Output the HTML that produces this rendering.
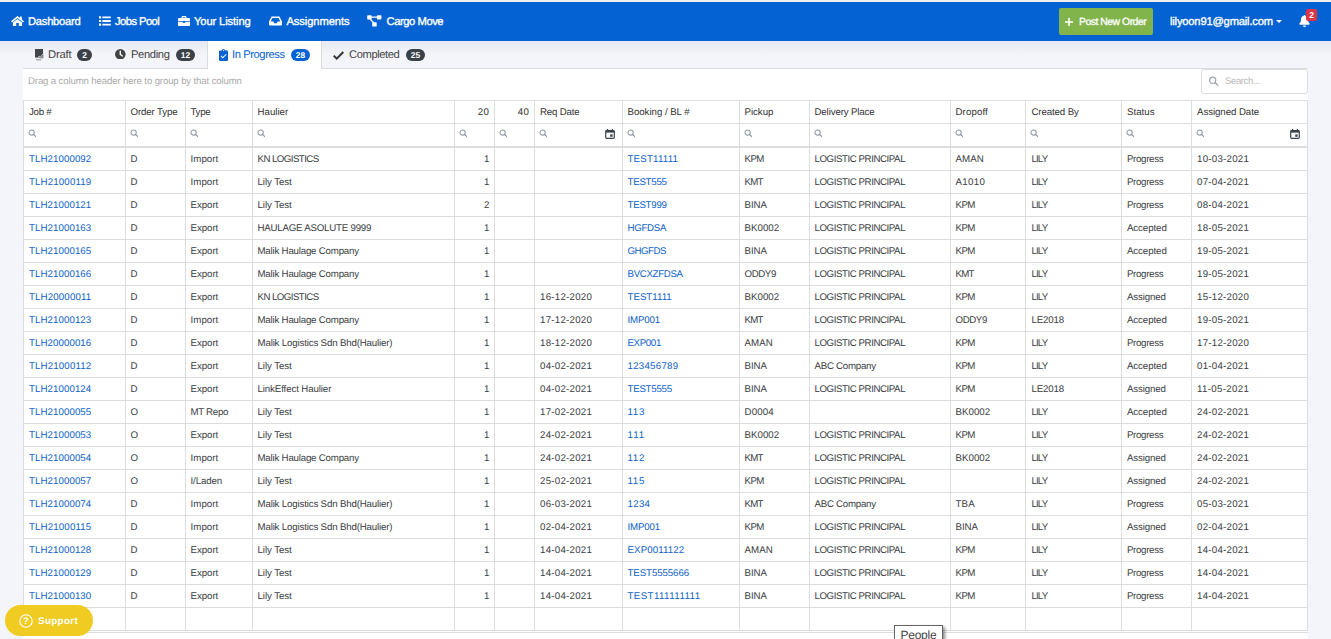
<!DOCTYPE html>
<html lang="en"><head><meta charset="utf-8"><title>In Progress</title>
<style>
*{box-sizing:border-box}
html,body{margin:0;padding:0}
body{width:1331px;height:639px;overflow:hidden;position:relative;background:#f4f5fa;font-family:"Liberation Sans",sans-serif;color:#333;text-rendering:geometricPrecision}
.topline{position:absolute;left:0;top:0;width:1331px;height:2px;background:#f3efee}
.nav{position:absolute;left:0;top:2px;width:1331px;height:39px;background:#0562d2}
.shadow{position:absolute;left:0;top:41px;width:1331px;height:14px;background:linear-gradient(#e6e9f2,#f4f5fa)}
.ni{position:absolute;top:0;height:39px;line-height:40px;color:#fff;font-size:11.2px;white-space:nowrap;font-weight:normal;-webkit-text-stroke:0.35px #fff}
.ni svg{position:absolute;top:14px}
.btn{position:absolute;left:1059px;top:6px;width:94px;height:27px;background:#82b44c;border-radius:2px;color:#fff;font-size:10.4px;line-height:29px;font-weight:normal;-webkit-text-stroke:0.3px #fff;letter-spacing:-0.48px}
.tabs{position:absolute;left:23px;top:41px;width:1285px;height:28px;border-bottom:1px solid #dcdcdc}
.tab{position:absolute;top:0;height:27px;font-size:11.2px;line-height:29px;color:#444;white-space:nowrap}
.tab.act{background:#fff;border-left:1px solid #dcdcdc;border-right:1px solid #dcdcdc;height:28px;color:#0562d2}
.badge{position:absolute;top:8px;height:12px;border-radius:6px;background:#3b4148;color:#fff;font-size:8.4px;font-weight:bold;line-height:12.5px;text-align:center}
.panel{position:absolute;left:23px;top:69px;width:1285px;height:571px;background:#fff}
.drag{position:absolute;left:28px;top:76px;font-size:9.6px;color:#aaa;line-height:12px;white-space:nowrap;letter-spacing:-0.12px}
.search{position:absolute;left:1201px;top:69px;width:107px;height:25px;border:1px solid #ddd;border-radius:3px;background:#fff;font-size:9.6px;color:#bbb;line-height:24.5px}
table.grid{position:absolute;left:23px;top:100px;border-collapse:separate;border-spacing:0;table-layout:fixed;width:1285px;border-top:1px solid #ddd;border-right:1px solid #ddd;font-size:9.7px;text-rendering:geometricPrecision}
table.grid td{border-left:1px solid #ddd;border-bottom:1px solid #ddd;height:23px;padding:2px 0 0 4.5px;white-space:nowrap;overflow:hidden;line-height:20px;color:#333;position:relative}
table.grid td.r{text-align:right;padding-left:0;padding-right:4.5px}
table.grid td.a{color:#0d62c9}
table.grid td.p0{padding-left:5.0px}
table.grid td.p6{padding-left:5.0px}
table.grid td.p11{padding-left:5.4px}
table.grid td.p12{padding-left:4.9px}
table.grid td.p13{padding-left:5.0px}
tr.ft td{height:24px;border-bottom:2px solid #ddd}
tr.dr td{color:#3a3d42}
.mag{position:absolute;left:3.7px;top:5.4px;width:8.8px;height:8.8px}
.cal{position:absolute;right:7px;top:5px;width:10px;height:10px}
.bottomline{position:absolute;left:23px;top:632px;width:1285px;height:1px;background:#ddd}
.support{position:absolute;left:5px;top:605px;width:88px;height:31px;border-radius:16px;background:#f0cc22;color:#fff;font-weight:bold;font-size:9.8px;line-height:33px}
.tip{position:absolute;left:894px;top:625px;width:49px;height:20px;border:1px solid #666;background:#fff;font-size:12px;line-height:18px;color:#444;box-shadow:2px 2px 3px rgba(0,0,0,.45)}
</style></head><body>
<div class="topline"></div>
<div class="nav">
 <div class="ni" style="left:28px;letter-spacing:-0.25px"><svg style="left:-17px" width="13" height="10" viewBox="0 0 13 10"><path fill="#fff" d="M6.5 0 L0 5.3 L1 6.5 L6.5 2 L12 6.5 L13 5.3 L10.8 3.5 V0.5 H9.1 V2.1 Z M6.5 2.9 L1.9 6.6 V10 H5.2 V7 H7.8 V10 H11.1 V6.6 Z"/></svg>Dashboard</div>
 <div class="ni" style="left:115px;letter-spacing:-0.55px"><svg style="left:-16px" width="12" height="10" viewBox="0 0 12 10"><path fill="#fff" d="M0 0.2h2.1v2.2h-2.1z M0 3.9h2.1v2.2h-2.1z M0 7.6h2.1v2.2h-2.1z M3.3 0.4h8.5v1.8h-8.5z M3.3 4.1h8.5v1.8h-8.5z M3.3 7.8h8.5v1.8h-8.5z"/></svg>Jobs Pool</div>
 <div class="ni" style="left:194px;letter-spacing:-0.12px"><svg style="left:-16px" width="12" height="10" viewBox="0 0 12 10"><path fill="#fff" fill-rule="evenodd" d="M3.6 0.9 Q3.6 0 4.5 0 H7.5 Q8.4 0 8.4 0.9 V2 H11 Q12 2 12 3 V5 H0 V3 Q0 2 1 2 H3.6 Z M4.8 1.2 V2 H7.2 V1.2 Z M0 5.8 H4.6 V6.8 H7.4 V5.8 H12 V9 Q12 10 11 10 H1 Q0 10 0 9 Z"/></svg>Your Listing</div>
 <div class="ni" style="left:286.5px;letter-spacing:-0.1px"><svg style="left:-17.5px" width="13" height="10" viewBox="0 0 13 10"><path fill="#fff" fill-rule="evenodd" d="M2.6 0.5 H10.4 L13 5.6 V8.6 Q13 9.6 12 9.6 H1 Q0 9.6 0 8.6 V5.6 Z M3.5 2 L1.7 5.6 H4.4 L5.2 7.2 H7.8 L8.6 5.6 H11.3 L9.5 2 Z"/></svg>Assignments</div>
 <div class="ni" style="left:386.5px;letter-spacing:-0.43px"><svg style="left:-19.2px;top:13px" width="15" height="12" viewBox="0 0 15 12"><rect x="0.2" y="0.2" width="4.5" height="4.3" rx="0.7" fill="#fff"/><rect x="9.9" y="0.2" width="4.5" height="4.3" rx="0.7" fill="#fff"/><rect x="5.2" y="7.3" width="4.5" height="4.3" rx="0.7" fill="#fff"/><path d="M4.5 2.1 H10 M3.3 4.2 L6.6 7.8" stroke="#fff" stroke-width="1.3" fill="none"/></svg>Cargo Move</div>
 <div class="btn"><svg style="position:absolute;left:6px;top:9.5px" width="8" height="8" viewBox="0 0 8 8"><path fill="#fff" d="M3.2 0h1.6v3.2h3.2v1.6h-3.2v3.2h-1.6v-3.2h-3.2v-1.6h3.2z"/></svg><span style="position:absolute;left:20px">Post New Order</span></div>
 <div class="ni" style="left:1170px;letter-spacing:-0.19px">lilyoon91@gmail.com<svg style="left:106px;top:17.5px" width="6" height="3" viewBox="0 0 6 3"><path fill="#fff" d="M0 0h6l-3 3z"/></svg></div>
 <svg style="position:absolute;left:1299px;top:13px" width="11" height="12" viewBox="0 0 11 12"><path fill="#fff" d="M5.5 0 Q6.3 0 6.3 0.8 Q9 1.5 9 4.8 Q9 7.2 10.6 8.6 Q11 9.6 10 9.8 H1 Q0 9.6 0.4 8.6 Q2 7.2 2 4.8 Q2 1.5 4.7 0.8 Q4.7 0 5.5 0 Z M4 10.4 H7 Q7 12 5.5 12 Q4 12 4 10.4 Z"/></svg>
 <div style="position:absolute;left:1306px;top:7px;width:11px;height:12px;border-radius:2px;background:#dc3545;color:#fff;font-size:8.5px;font-weight:bold;line-height:12px;text-align:center">2</div>
</div>
<div class="shadow"></div>
<div class="tabs">
 <div class="tab" style="left:0;width:79px"><svg style="position:absolute;left:11.5px;top:7.7px" width="9" height="12" viewBox="0 0 9 12"><path fill="#41464d" d="M0 0h8v8.6h-8z"/><path d="M3.4 8.6 q0.9 -3 1.8 -0.6 q0.6 1.6 1.4 -1.6 L8.6 4.6" stroke="#c9ced6" stroke-width="1" fill="none"/><path d="M4.6 8.6 L8.6 5.6 V9.4 H4.6z" fill="#8f96a0" opacity=".8"/><path d="M1 10.8 H6.2" stroke="#8a9098" stroke-width="1"/></svg><span style="position:absolute;left:25px;letter-spacing:-0.15px">Draft</span><span class="badge" style="left:54px;width:15px">2</span></div>
 <div class="tab" style="left:79px;width:105px"><svg style="position:absolute;left:13px;top:7.8px" width="10.6" height="10.6" viewBox="0 0 11 11"><circle cx="5.5" cy="5.5" r="5.5" fill="#444"/><path d="M5.5 2.2 V5.6 L7.6 7.2" stroke="#fff" stroke-width="1.4" fill="none" stroke-linecap="round"/></svg><span style="position:absolute;left:29px;letter-spacing:-0.35px">Pending</span><span class="badge" style="left:74px;width:19px">12</span></div>
 <div class="tab act" style="left:184px;width:115px"><svg style="position:absolute;left:11px;top:7.6px" width="9" height="12" viewBox="0 0 9 12"><path fill="#0562d2" fill-rule="evenodd" d="M1 1.5 H2.8 Q3 0 4.5 0 Q6 0 6.2 1.5 H8 Q9 1.5 9 2.5 V11 Q9 12 8 12 H1 Q0 12 0 11 V2.5 Q0 1.5 1 1.5 Z M4.5 1 A0.6 0.6 0 1 0 4.5 2.2 A0.6 0.6 0 1 0 4.5 1 Z M3.8 9.4 L7.6 5.6 L6.9 4.9 L3.8 8 L2.3 6.5 L1.6 7.2 Z"/></svg><span style="position:absolute;left:24px;letter-spacing:-0.42px">In Progress</span><span class="badge" style="left:83px;width:19px;background:#0562d2">28</span></div>
 <div class="tab" style="left:299px;width:120px"><svg style="position:absolute;left:11px;top:9.6px" width="11" height="9" viewBox="0 0 11 9"><path fill="#333" d="M3.7 9 L0 5.3 L1.4 3.9 L3.7 6.2 L9.6 0.3 L11 1.7 Z"/></svg><span style="position:absolute;left:27px;letter-spacing:-0.41px">Completed</span><span class="badge" style="left:84px;width:19px">25</span></div>
</div>
<div class="panel"></div>
<div class="drag">Drag a column header here to group by that column</div>
<div class="search"><svg style="position:absolute;left:6px;top:5px" width="12" height="12" viewBox="0 0 12 12"><circle cx="4.7" cy="5.2" r="3.1" fill="none" stroke="#9a9fa8" stroke-width="1.1"/><path d="M7 7.5 L9.9 10.2" stroke="#9a9fa8" stroke-width="1.2" stroke-linecap="round"/></svg><span style="position:absolute;left:23px;letter-spacing:-0.42px">Search...</span></div>
<table class="grid"><colgroup><col style="width:102px"><col style="width:60px"><col style="width:67px"><col style="width:202px"><col style="width:40px"><col style="width:40px"><col style="width:88px"><col style="width:117px"><col style="width:70px"><col style="width:141px"><col style="width:75px"><col style="width:96px"><col style="width:70px"><col style="width:116px"></colgroup>
<tr class="hd"><td class="p0"><span style="letter-spacing:-0.25px">Job #</span></td><td><span style="letter-spacing:-0.12px">Order Type</span></td><td><span style="letter-spacing:-0.27px">Type</span></td><td><span style="letter-spacing:-0.00px">Haulier</span></td><td class="r"><span style="letter-spacing:0.52px">20</span></td><td class="r"><span style="letter-spacing:0.52px">40</span></td><td class="p6"><span style="letter-spacing:-0.18px">Req Date</span></td><td><span style="letter-spacing:-0.04px">Booking / BL #</span></td><td><span style="letter-spacing:-0.04px">Pickup</span></td><td><span style="letter-spacing:-0.13px">Delivery Place</span></td><td><span style="letter-spacing:0.10px">Dropoff</span></td><td class="p11"><span style="letter-spacing:-0.11px">Created By</span></td><td class="p12"><span style="letter-spacing:0.05px">Status</span></td><td class="p13"><span style="letter-spacing:-0.07px">Assigned Date</span></td></tr>
<tr class="ft"><td><svg class="mag" viewBox="0 0 10 10"><circle cx="4.1" cy="4.1" r="3" fill="none" stroke="#8e96a3" stroke-width="1.15"/><path d="M6.3 6.3 L9.2 9" stroke="#8e96a3" stroke-width="1.3" stroke-linecap="round"/></svg></td><td><svg class="mag" viewBox="0 0 10 10"><circle cx="4.1" cy="4.1" r="3" fill="none" stroke="#8e96a3" stroke-width="1.15"/><path d="M6.3 6.3 L9.2 9" stroke="#8e96a3" stroke-width="1.3" stroke-linecap="round"/></svg></td><td><svg class="mag" viewBox="0 0 10 10"><circle cx="4.1" cy="4.1" r="3" fill="none" stroke="#8e96a3" stroke-width="1.15"/><path d="M6.3 6.3 L9.2 9" stroke="#8e96a3" stroke-width="1.3" stroke-linecap="round"/></svg></td><td><svg class="mag" viewBox="0 0 10 10"><circle cx="4.1" cy="4.1" r="3" fill="none" stroke="#8e96a3" stroke-width="1.15"/><path d="M6.3 6.3 L9.2 9" stroke="#8e96a3" stroke-width="1.3" stroke-linecap="round"/></svg></td><td><svg class="mag" viewBox="0 0 10 10"><circle cx="4.1" cy="4.1" r="3" fill="none" stroke="#8e96a3" stroke-width="1.15"/><path d="M6.3 6.3 L9.2 9" stroke="#8e96a3" stroke-width="1.3" stroke-linecap="round"/></svg></td><td><svg class="mag" viewBox="0 0 10 10"><circle cx="4.1" cy="4.1" r="3" fill="none" stroke="#8e96a3" stroke-width="1.15"/><path d="M6.3 6.3 L9.2 9" stroke="#8e96a3" stroke-width="1.3" stroke-linecap="round"/></svg></td><td><svg class="mag" viewBox="0 0 10 10"><circle cx="4.1" cy="4.1" r="3" fill="none" stroke="#8e96a3" stroke-width="1.15"/><path d="M6.3 6.3 L9.2 9" stroke="#8e96a3" stroke-width="1.3" stroke-linecap="round"/></svg><svg class="cal" viewBox="0 0 10 10"><rect x="0.7" y="1.6" width="8.6" height="7.8" rx="1.1" fill="none" stroke="#3a424c" stroke-width="1.2"/><rect x="0.7" y="1.4" width="8.6" height="2.2" fill="#3a424c"/><rect x="2" y="0" width="1.2" height="2" fill="#3a424c"/><rect x="6.8" y="0" width="1.2" height="2" fill="#3a424c"/><rect x="5.2" y="5.4" width="2.4" height="2.4" fill="#3a424c"/></svg></td><td><svg class="mag" viewBox="0 0 10 10"><circle cx="4.1" cy="4.1" r="3" fill="none" stroke="#8e96a3" stroke-width="1.15"/><path d="M6.3 6.3 L9.2 9" stroke="#8e96a3" stroke-width="1.3" stroke-linecap="round"/></svg></td><td><svg class="mag" viewBox="0 0 10 10"><circle cx="4.1" cy="4.1" r="3" fill="none" stroke="#8e96a3" stroke-width="1.15"/><path d="M6.3 6.3 L9.2 9" stroke="#8e96a3" stroke-width="1.3" stroke-linecap="round"/></svg></td><td><svg class="mag" viewBox="0 0 10 10"><circle cx="4.1" cy="4.1" r="3" fill="none" stroke="#8e96a3" stroke-width="1.15"/><path d="M6.3 6.3 L9.2 9" stroke="#8e96a3" stroke-width="1.3" stroke-linecap="round"/></svg></td><td><svg class="mag" viewBox="0 0 10 10"><circle cx="4.1" cy="4.1" r="3" fill="none" stroke="#8e96a3" stroke-width="1.15"/><path d="M6.3 6.3 L9.2 9" stroke="#8e96a3" stroke-width="1.3" stroke-linecap="round"/></svg></td><td><svg class="mag" viewBox="0 0 10 10"><circle cx="4.1" cy="4.1" r="3" fill="none" stroke="#8e96a3" stroke-width="1.15"/><path d="M6.3 6.3 L9.2 9" stroke="#8e96a3" stroke-width="1.3" stroke-linecap="round"/></svg></td><td><svg class="mag" viewBox="0 0 10 10"><circle cx="4.1" cy="4.1" r="3" fill="none" stroke="#8e96a3" stroke-width="1.15"/><path d="M6.3 6.3 L9.2 9" stroke="#8e96a3" stroke-width="1.3" stroke-linecap="round"/></svg></td><td><svg class="mag" viewBox="0 0 10 10"><circle cx="4.1" cy="4.1" r="3" fill="none" stroke="#8e96a3" stroke-width="1.15"/><path d="M6.3 6.3 L9.2 9" stroke="#8e96a3" stroke-width="1.3" stroke-linecap="round"/></svg><svg class="cal" viewBox="0 0 10 10"><rect x="0.7" y="1.6" width="8.6" height="7.8" rx="1.1" fill="none" stroke="#3a424c" stroke-width="1.2"/><rect x="0.7" y="1.4" width="8.6" height="2.2" fill="#3a424c"/><rect x="2" y="0" width="1.2" height="2" fill="#3a424c"/><rect x="6.8" y="0" width="1.2" height="2" fill="#3a424c"/><rect x="5.2" y="5.4" width="2.4" height="2.4" fill="#3a424c"/></svg></td></tr>
<tr class="dr"><td class="p0 a"><span style="letter-spacing:0.08px">TLH21000092</span></td><td>D</td><td><span style="letter-spacing:0.07px">Import</span></td><td><span style="letter-spacing:-0.56px">KN LOGISTICS</span></td><td class="r">1</td><td class="r"></td><td class="p6"></td><td class="a"><span style="letter-spacing:0.20px">TEST11111</span></td><td><span style="letter-spacing:-0.55px">KPM</span></td><td><span style="letter-spacing:-0.43px">LOGISTIC PRINCIPAL</span></td><td><span style="letter-spacing:0.07px">AMAN</span></td><td class="p11"><span style="letter-spacing:-0.81px">LILY</span></td><td class="p12"><span style="letter-spacing:-0.30px">Progress</span></td><td class="p13"><span style="letter-spacing:0.26px">10-03-2021</span></td></tr>
<tr class="dr"><td class="p0 a"><span style="letter-spacing:0.15px">TLH21000119</span></td><td>D</td><td><span style="letter-spacing:0.07px">Import</span></td><td><span style="letter-spacing:-0.08px">Lily Test</span></td><td class="r">1</td><td class="r"></td><td class="p6"></td><td class="a"><span style="letter-spacing:-0.25px">TEST555</span></td><td><span style="letter-spacing:-0.78px">KMT</span></td><td><span style="letter-spacing:-0.43px">LOGISTIC PRINCIPAL</span></td><td><span style="letter-spacing:0.37px">A1010</span></td><td class="p11"><span style="letter-spacing:-0.81px">LILY</span></td><td class="p12"><span style="letter-spacing:-0.30px">Progress</span></td><td class="p13"><span style="letter-spacing:0.26px">07-04-2021</span></td></tr>
<tr class="dr"><td class="p0 a"><span style="letter-spacing:0.08px">TLH21000121</span></td><td>D</td><td><span style="letter-spacing:-0.04px">Export</span></td><td><span style="letter-spacing:-0.08px">Lily Test</span></td><td class="r">2</td><td class="r"></td><td class="p6"></td><td class="a"><span style="letter-spacing:-0.25px">TEST999</span></td><td><span style="letter-spacing:-0.04px">BINA</span></td><td><span style="letter-spacing:-0.43px">LOGISTIC PRINCIPAL</span></td><td><span style="letter-spacing:-0.55px">KPM</span></td><td class="p11"><span style="letter-spacing:-0.81px">LILY</span></td><td class="p12"><span style="letter-spacing:-0.30px">Progress</span></td><td class="p13"><span style="letter-spacing:0.26px">08-04-2021</span></td></tr>
<tr class="dr"><td class="p0 a"><span style="letter-spacing:0.08px">TLH21000163</span></td><td>D</td><td><span style="letter-spacing:-0.04px">Export</span></td><td><span style="letter-spacing:-0.21px">HAULAGE ASOLUTE 9999</span></td><td class="r">1</td><td class="r"></td><td class="p6"></td><td class="a"><span style="letter-spacing:-0.29px">HGFDSA</span></td><td><span style="letter-spacing:0.04px">BK0002</span></td><td><span style="letter-spacing:-0.43px">LOGISTIC PRINCIPAL</span></td><td><span style="letter-spacing:-0.55px">KPM</span></td><td class="p11"><span style="letter-spacing:-0.81px">LILY</span></td><td class="p12"><span style="letter-spacing:-0.07px">Accepted</span></td><td class="p13"><span style="letter-spacing:0.26px">18-05-2021</span></td></tr>
<tr class="dr"><td class="p0 a"><span style="letter-spacing:0.08px">TLH21000165</span></td><td>D</td><td><span style="letter-spacing:-0.04px">Export</span></td><td><span style="letter-spacing:-0.20px">Malik Haulage Company</span></td><td class="r">1</td><td class="r"></td><td class="p6"></td><td class="a"><span style="letter-spacing:-0.51px">GHGFDS</span></td><td><span style="letter-spacing:-0.04px">BINA</span></td><td><span style="letter-spacing:-0.43px">LOGISTIC PRINCIPAL</span></td><td><span style="letter-spacing:-0.55px">KPM</span></td><td class="p11"><span style="letter-spacing:-0.81px">LILY</span></td><td class="p12"><span style="letter-spacing:-0.07px">Accepted</span></td><td class="p13"><span style="letter-spacing:0.26px">19-05-2021</span></td></tr>
<tr class="dr"><td class="p0 a"><span style="letter-spacing:0.08px">TLH21000166</span></td><td>D</td><td><span style="letter-spacing:-0.04px">Export</span></td><td><span style="letter-spacing:-0.20px">Malik Haulage Company</span></td><td class="r">1</td><td class="r"></td><td class="p6"></td><td class="a"><span style="letter-spacing:-0.32px">BVCXZFDSA</span></td><td><span style="letter-spacing:-0.40px">ODDY9</span></td><td><span style="letter-spacing:-0.43px">LOGISTIC PRINCIPAL</span></td><td><span style="letter-spacing:-0.78px">KMT</span></td><td class="p11"><span style="letter-spacing:-0.81px">LILY</span></td><td class="p12"><span style="letter-spacing:-0.30px">Progress</span></td><td class="p13"><span style="letter-spacing:0.26px">19-05-2021</span></td></tr>
<tr class="dr"><td class="p0 a"><span style="letter-spacing:0.15px">TLH20000011</span></td><td>D</td><td><span style="letter-spacing:-0.04px">Export</span></td><td><span style="letter-spacing:-0.56px">KN LOGISTICS</span></td><td class="r">1</td><td class="r"></td><td class="p6"><span style="letter-spacing:0.26px">16-12-2020</span></td><td class="a"><span style="letter-spacing:0.01px">TEST1111</span></td><td><span style="letter-spacing:0.04px">BK0002</span></td><td><span style="letter-spacing:-0.43px">LOGISTIC PRINCIPAL</span></td><td><span style="letter-spacing:-0.55px">KPM</span></td><td class="p11"><span style="letter-spacing:-0.81px">LILY</span></td><td class="p12"><span style="letter-spacing:-0.12px">Assigned</span></td><td class="p13"><span style="letter-spacing:0.26px">15-12-2020</span></td></tr>
<tr class="dr"><td class="p0 a"><span style="letter-spacing:0.08px">TLH21000123</span></td><td>D</td><td><span style="letter-spacing:0.07px">Import</span></td><td><span style="letter-spacing:-0.20px">Malik Haulage Company</span></td><td class="r">1</td><td class="r"></td><td class="p6"><span style="letter-spacing:0.26px">17-12-2020</span></td><td class="a"><span style="letter-spacing:-0.16px">IMP001</span></td><td><span style="letter-spacing:-0.78px">KMT</span></td><td><span style="letter-spacing:-0.43px">LOGISTIC PRINCIPAL</span></td><td><span style="letter-spacing:-0.40px">ODDY9</span></td><td class="p11"><span style="letter-spacing:-0.14px">LE2018</span></td><td class="p12"><span style="letter-spacing:-0.07px">Accepted</span></td><td class="p13"><span style="letter-spacing:0.26px">19-05-2021</span></td></tr>
<tr class="dr"><td class="p0 a"><span style="letter-spacing:0.08px">TLH20000016</span></td><td>D</td><td><span style="letter-spacing:-0.04px">Export</span></td><td><span style="letter-spacing:-0.16px">Malik Logistics Sdn Bhd(Haulier)</span></td><td class="r">1</td><td class="r"></td><td class="p6"><span style="letter-spacing:0.26px">18-12-2020</span></td><td class="a"><span style="letter-spacing:-0.35px">EXP001</span></td><td><span style="letter-spacing:0.07px">AMAN</span></td><td><span style="letter-spacing:-0.43px">LOGISTIC PRINCIPAL</span></td><td><span style="letter-spacing:-0.55px">KPM</span></td><td class="p11"><span style="letter-spacing:-0.81px">LILY</span></td><td class="p12"><span style="letter-spacing:-0.30px">Progress</span></td><td class="p13"><span style="letter-spacing:0.26px">17-12-2020</span></td></tr>
<tr class="dr"><td class="p0 a"><span style="letter-spacing:0.15px">TLH21000112</span></td><td>D</td><td><span style="letter-spacing:-0.04px">Export</span></td><td><span style="letter-spacing:-0.08px">Lily Test</span></td><td class="r">1</td><td class="r"></td><td class="p6"><span style="letter-spacing:0.26px">04-02-2021</span></td><td class="a"><span style="letter-spacing:0.26px">123456789</span></td><td><span style="letter-spacing:-0.04px">BINA</span></td><td><span style="letter-spacing:-0.25px">ABC Company</span></td><td><span style="letter-spacing:-0.55px">KPM</span></td><td class="p11"><span style="letter-spacing:-0.81px">LILY</span></td><td class="p12"><span style="letter-spacing:-0.07px">Accepted</span></td><td class="p13"><span style="letter-spacing:0.26px">01-04-2021</span></td></tr>
<tr class="dr"><td class="p0 a"><span style="letter-spacing:0.08px">TLH21000124</span></td><td>D</td><td><span style="letter-spacing:-0.04px">Export</span></td><td><span style="letter-spacing:-0.11px">LinkEffect Haulier</span></td><td class="r">1</td><td class="r"></td><td class="p6"><span style="letter-spacing:0.26px">04-02-2021</span></td><td class="a"><span style="letter-spacing:-0.24px">TEST5555</span></td><td><span style="letter-spacing:-0.04px">BINA</span></td><td><span style="letter-spacing:-0.43px">LOGISTIC PRINCIPAL</span></td><td><span style="letter-spacing:-0.55px">KPM</span></td><td class="p11"><span style="letter-spacing:-0.14px">LE2018</span></td><td class="p12"><span style="letter-spacing:-0.12px">Assigned</span></td><td class="p13"><span style="letter-spacing:0.34px">11-05-2021</span></td></tr>
<tr class="dr"><td class="p0 a"><span style="letter-spacing:0.08px">TLH21000055</span></td><td>O</td><td><span style="letter-spacing:-0.30px">MT Repo</span></td><td><span style="letter-spacing:-0.08px">Lily Test</span></td><td class="r">1</td><td class="r"></td><td class="p6"><span style="letter-spacing:0.26px">17-02-2021</span></td><td class="a"><span style="letter-spacing:0.67px">113</span></td><td><span style="letter-spacing:0.13px">D0004</span></td><td></td><td><span style="letter-spacing:0.04px">BK0002</span></td><td class="p11"><span style="letter-spacing:-0.81px">LILY</span></td><td class="p12"><span style="letter-spacing:-0.07px">Accepted</span></td><td class="p13"><span style="letter-spacing:0.26px">24-02-2021</span></td></tr>
<tr class="dr"><td class="p0 a"><span style="letter-spacing:0.08px">TLH21000053</span></td><td>O</td><td><span style="letter-spacing:-0.04px">Export</span></td><td><span style="letter-spacing:-0.08px">Lily Test</span></td><td class="r">1</td><td class="r"></td><td class="p6"><span style="letter-spacing:0.26px">24-02-2021</span></td><td class="a"><span style="letter-spacing:1.00px">111</span></td><td><span style="letter-spacing:0.04px">BK0002</span></td><td><span style="letter-spacing:-0.43px">LOGISTIC PRINCIPAL</span></td><td><span style="letter-spacing:-0.55px">KPM</span></td><td class="p11"><span style="letter-spacing:-0.81px">LILY</span></td><td class="p12"><span style="letter-spacing:-0.30px">Progress</span></td><td class="p13"><span style="letter-spacing:0.26px">24-02-2021</span></td></tr>
<tr class="dr"><td class="p0 a"><span style="letter-spacing:0.08px">TLH21000054</span></td><td>O</td><td><span style="letter-spacing:0.07px">Import</span></td><td><span style="letter-spacing:-0.20px">Malik Haulage Company</span></td><td class="r">1</td><td class="r"></td><td class="p6"><span style="letter-spacing:0.26px">24-02-2021</span></td><td class="a"><span style="letter-spacing:0.67px">112</span></td><td><span style="letter-spacing:-0.78px">KMT</span></td><td><span style="letter-spacing:-0.43px">LOGISTIC PRINCIPAL</span></td><td><span style="letter-spacing:0.04px">BK0002</span></td><td class="p11"><span style="letter-spacing:-0.81px">LILY</span></td><td class="p12"><span style="letter-spacing:-0.12px">Assigned</span></td><td class="p13"><span style="letter-spacing:0.26px">24-02-2021</span></td></tr>
<tr class="dr"><td class="p0 a"><span style="letter-spacing:0.08px">TLH21000057</span></td><td>O</td><td><span style="letter-spacing:-0.10px">I/Laden</span></td><td><span style="letter-spacing:-0.08px">Lily Test</span></td><td class="r">1</td><td class="r"></td><td class="p6"><span style="letter-spacing:0.26px">25-02-2021</span></td><td class="a"><span style="letter-spacing:0.67px">115</span></td><td><span style="letter-spacing:-0.55px">KPM</span></td><td><span style="letter-spacing:-0.43px">LOGISTIC PRINCIPAL</span></td><td></td><td class="p11"><span style="letter-spacing:-0.81px">LILY</span></td><td class="p12"><span style="letter-spacing:-0.12px">Assigned</span></td><td class="p13"><span style="letter-spacing:0.26px">24-02-2021</span></td></tr>
<tr class="dr"><td class="p0 a"><span style="letter-spacing:0.08px">TLH21000074</span></td><td>D</td><td><span style="letter-spacing:0.07px">Import</span></td><td><span style="letter-spacing:-0.16px">Malik Logistics Sdn Bhd(Haulier)</span></td><td class="r">1</td><td class="r"></td><td class="p6"><span style="letter-spacing:0.26px">06-03-2021</span></td><td class="a"><span style="letter-spacing:0.31px">1234</span></td><td><span style="letter-spacing:-0.78px">KMT</span></td><td><span style="letter-spacing:-0.25px">ABC Company</span></td><td><span style="letter-spacing:0.13px">TBA</span></td><td class="p11"><span style="letter-spacing:-0.81px">LILY</span></td><td class="p12"><span style="letter-spacing:-0.30px">Progress</span></td><td class="p13"><span style="letter-spacing:0.26px">05-03-2021</span></td></tr>
<tr class="dr"><td class="p0 a"><span style="letter-spacing:0.15px">TLH21000115</span></td><td>D</td><td><span style="letter-spacing:0.07px">Import</span></td><td><span style="letter-spacing:-0.16px">Malik Logistics Sdn Bhd(Haulier)</span></td><td class="r">1</td><td class="r"></td><td class="p6"><span style="letter-spacing:0.26px">02-04-2021</span></td><td class="a"><span style="letter-spacing:-0.16px">IMP001</span></td><td><span style="letter-spacing:-0.55px">KPM</span></td><td><span style="letter-spacing:-0.43px">LOGISTIC PRINCIPAL</span></td><td><span style="letter-spacing:-0.04px">BINA</span></td><td class="p11"><span style="letter-spacing:-0.81px">LILY</span></td><td class="p12"><span style="letter-spacing:-0.12px">Assigned</span></td><td class="p13"><span style="letter-spacing:0.26px">02-04-2021</span></td></tr>
<tr class="dr"><td class="p0 a"><span style="letter-spacing:0.08px">TLH21000128</span></td><td>D</td><td><span style="letter-spacing:-0.04px">Export</span></td><td><span style="letter-spacing:-0.08px">Lily Test</span></td><td class="r">1</td><td class="r"></td><td class="p6"><span style="letter-spacing:0.26px">14-04-2021</span></td><td class="a"><span style="letter-spacing:0.11px">EXP0011122</span></td><td><span style="letter-spacing:0.07px">AMAN</span></td><td><span style="letter-spacing:-0.43px">LOGISTIC PRINCIPAL</span></td><td><span style="letter-spacing:-0.55px">KPM</span></td><td class="p11"><span style="letter-spacing:-0.81px">LILY</span></td><td class="p12"><span style="letter-spacing:-0.30px">Progress</span></td><td class="p13"><span style="letter-spacing:0.26px">14-04-2021</span></td></tr>
<tr class="dr"><td class="p0 a"><span style="letter-spacing:0.08px">TLH21000129</span></td><td>D</td><td><span style="letter-spacing:-0.04px">Export</span></td><td><span style="letter-spacing:-0.08px">Lily Test</span></td><td class="r">1</td><td class="r"></td><td class="p6"><span style="letter-spacing:0.26px">14-04-2021</span></td><td class="a"><span style="letter-spacing:-0.09px">TEST5555666</span></td><td><span style="letter-spacing:-0.04px">BINA</span></td><td><span style="letter-spacing:-0.43px">LOGISTIC PRINCIPAL</span></td><td><span style="letter-spacing:-0.55px">KPM</span></td><td class="p11"><span style="letter-spacing:-0.81px">LILY</span></td><td class="p12"><span style="letter-spacing:-0.30px">Progress</span></td><td class="p13"><span style="letter-spacing:0.26px">14-04-2021</span></td></tr>
<tr class="dr"><td class="p0 a"><span style="letter-spacing:0.08px">TLH21000130</span></td><td>D</td><td><span style="letter-spacing:-0.04px">Export</span></td><td><span style="letter-spacing:-0.08px">Lily Test</span></td><td class="r">1</td><td class="r"></td><td class="p6"><span style="letter-spacing:0.26px">14-04-2021</span></td><td class="a"><span style="letter-spacing:0.42px">TEST111111111</span></td><td><span style="letter-spacing:-0.04px">BINA</span></td><td><span style="letter-spacing:-0.43px">LOGISTIC PRINCIPAL</span></td><td><span style="letter-spacing:-0.55px">KPM</span></td><td class="p11"><span style="letter-spacing:-0.81px">LILY</span></td><td class="p12"><span style="letter-spacing:-0.30px">Progress</span></td><td class="p13"><span style="letter-spacing:0.26px">14-04-2021</span></td></tr>
<tr class="em"><td></td><td></td><td></td><td></td><td></td><td></td><td></td><td></td><td></td><td></td><td></td><td></td><td></td><td></td></tr>
</table>
<div class="bottomline"></div>
<div class="support"><svg style="position:absolute;left:14px;top:9px" width="14" height="14" viewBox="0 0 14 14"><circle cx="7" cy="7" r="6.2" fill="none" stroke="#fff" stroke-width="1.1"/><text x="7" y="10.4" font-size="9.5" font-family="Liberation Sans, sans-serif" font-weight="bold" fill="#fff" text-anchor="middle">?</text></svg><span style="position:absolute;left:33px;letter-spacing:0.35px">Support</span></div>
<div class="tip"><span style="position:absolute;left:5.5px;top:0;letter-spacing:-0.25px">People</span></div>
</body></html>
